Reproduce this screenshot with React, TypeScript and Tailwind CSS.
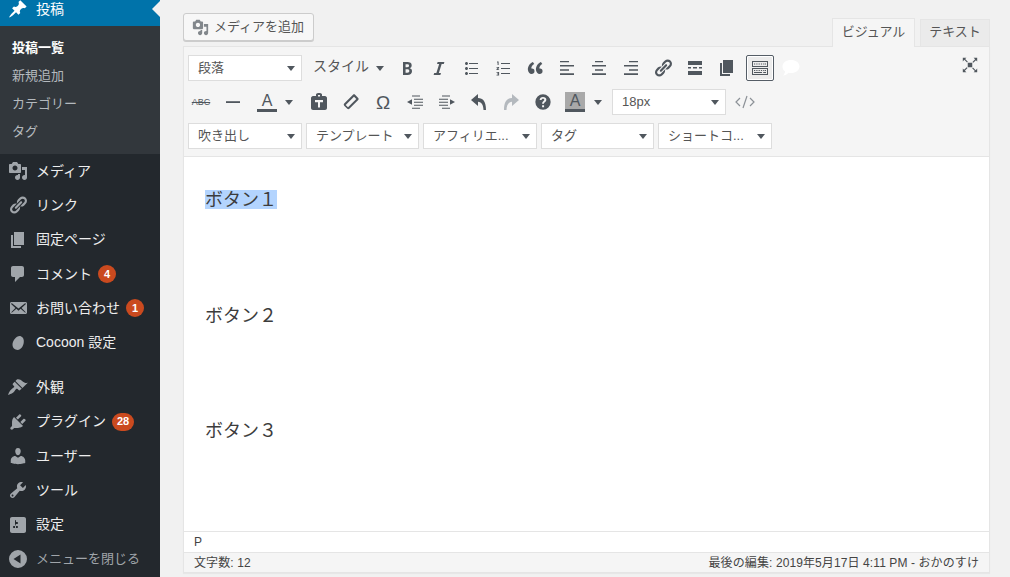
import React from "react";

const P: Record<string, string> = {
  post: "M10.44 3.02l1.82-1.82 6.36 6.35-1.83 1.82c-1.05-.68-2.48-.57-3.41.36l-.75.75c-.92.93-1.04 2.35-.35 3.41l-1.83 1.82-2.41-2.41-2.8 2.79c-.42.42-3.38 2.71-3.8 2.29s1.86-3.39 2.28-3.81l2.79-2.79L4.1 9.36l1.83-1.82c1.05.69 2.48.57 3.4-.36l.75-.75c.93-.92 1.05-2.35.36-3.41z",
  media: "M13 11V4c0-.55-.45-1-1-1h-1.67L9 1H5L3.67 3H2c-.55 0-1 .45-1 1v7c0 .55.45 1 1 1h10c.55 0 1-.45 1-1zM7 4.5c1.38 0 2.5 1.12 2.5 2.5S8.38 9.5 7 9.5 4.5 8.38 4.5 7 5.62 4.5 7 4.5zM14 6h5v10.5c0 1.38-1.12 2.5-2.5 2.5S14 17.88 14 16.5s1.12-2.5 2.5-2.5c.17 0 .34.02.5.05V9h-3V6zm-4 8.05V13h2v3.5c0 1.38-1.12 2.5-2.5 2.5S7 17.88 7 16.5 8.12 14 9.5 14c.17 0 .34.02.5.05z",
  link: "M17.74 2.76c1.68 1.69 1.68 4.41 0 6.1l-1.53 1.52c-1.12 1.12-2.7 1.47-4.14 1.09l2.62-2.61.76-.77.76-.76c.84-.84.84-2.2 0-3.04-.84-.85-2.2-.85-3.04 0l-.77.76-3.38 3.38c-.37-1.44-.02-3.02 1.1-4.14l1.52-1.53c1.69-1.68 4.42-1.68 6.1 0zM8.59 13.43l5.34-5.34c.42-.42.42-1.1 0-1.52-.44-.43-1.13-.39-1.53 0l-5.33 5.34c-.42.42-.42 1.1 0 1.52.44.43 1.13.39 1.52 0zm-.76 2.29l4.14-4.15c.38 1.44.03 3.02-1.09 4.14l-1.52 1.53c-1.69 1.68-4.41 1.68-6.1 0-1.68-1.68-1.68-4.42 0-6.1l1.53-1.52c1.12-1.12 2.7-1.47 4.14-1.1l-4.14 4.15c-.85.84-.85 2.2 0 3.05.84.84 2.2.84 3.04 0z",
  page: "M6 15V2h10v13H6zm-1 1h8v2H3V5h2v11z",
  comment: "M5 2h9c1.1 0 2 .9 2 2v7c0 1.1-.9 2-2 2h-2l-5 5v-5H5c-1.1 0-2-.9-2-2V4c0-1.1.9-2 2-2z",
  mail: "M19 14.5v-9c0-.83-.67-1.5-1.5-1.5H3.49c-.83 0-1.5.67-1.5 1.5v9c0 .83.67 1.5 1.5 1.5H17.5c.83 0 1.5-.67 1.5-1.5zm-1.31-9.11c.33.33.15.67-.03.84L13.6 9.95l3.9 4.06c.12.14.2.36.06.51-.13.16-.43.15-.56.05l-4.37-3.73-2.14 1.95-2.13-1.95-4.37 3.73c-.13.1-.43.11-.56-.05-.14-.15-.06-.37.06-.51l3.9-4.06-4.06-3.72c-.18-.17-.36-.51-.03-.84s.67-.17.95.07l6.24 5.04 6.25-5.04c.28-.24.62-.4.95-.07z",
  brush: "M14.48 11.06L7.41 3.99l1.5-1.5c.5-.56 2.3-.47 3.51.32 1.21.8 1.43 1.28 2.91 2.1 1.18.64 2.45 1.26 4.45.85zm-.71.71L6.7 4.7 4.93 6.47c-.39.39-.39 1.02 0 1.41l1.06 1.06c.39.39.39 1.03 0 1.42-.6.6-1.43 1.11-2.21 1.69-.35.26-.7.53-1.01.84C1.43 13.71 0 18 0 18s4.29-1.43 5.59-2.72c.31-.31.58-.66.84-1.01.58-.78 1.09-1.61 1.69-2.21.39-.39 1.03-.39 1.42 0l1.06 1.06c.39.39 1.02.39 1.41 0z",
  plugin: "M13.11 4.36L9.87 7.6 8 5.73l3.24-3.24c.35-.34 1.05-.2 1.56.32.52.51.66 1.21.31 1.55zm-8 1.77l.91-1.12 9.01 9.01-1.19.84c-.71.71-2.63 1.16-3.82 1.16H6.14L4.9 17.26c-.59.59-1.54.59-2.12 0-.59-.58-.59-1.53 0-2.12l1.24-1.24v-3.88c0-1.13.4-3.19 1.09-3.89zm7.26 3.97l3.24-3.24c.34-.35 1.04-.21 1.55.31.52.51.66 1.21.31 1.55l-3.24 3.25z",
  user: "M10 9.25c-2.27 0-2.73-3.44-2.73-3.44C7 4.02 7.82 2 9.97 2c2.16 0 2.98 2.02 2.71 3.81 0 0-.41 3.44-2.68 3.44zm0 2.57L12.72 10c2.39 0 4.52 2.33 4.52 4.53v2.49s-3.65 1.13-7.24 1.13c-3.65 0-7.24-1.13-7.24-1.13v-2.49c0-2.25 1.94-4.48 4.47-4.48z",
  tool: "M16.68 9.77c-1.34 1.34-3.3 1.67-4.95.99l-5.41 6.52c-.99.99-2.59.99-3.58 0s-.99-2.59 0-3.57l6.52-5.42c-.68-1.65-.35-3.61.99-4.95 1.28-1.28 3.12-1.62 4.72-1.06l-2.89 2.89 2.82 2.82 2.86-2.87c.53 1.58.18 3.39-1.08 4.65zM3.81 16.21c.4.39 1.04.39 1.43 0 .4-.4.4-1.04 0-1.43-.39-.4-1.03-.4-1.43 0-.39.39-.39 1.03 0 1.43z",
  settings: "M18 16V4c0-1.1-.9-2-2-2H4c-1.1 0-2 .9-2 2v12c0 1.1.9 2 2 2h12c1.1 0 2-.9 2-2zM8 11h1c.55 0 1 .45 1 1s-.45 1-1 1H8v1.5c0 .28-.22.5-.5.5s-.5-.22-.5-.5V13H6c-.55 0-1-.45-1-1s.45-1 1-1h1V5.5c0-.28.22-.5.5-.5s.5.22.5.5V7h1c.55 0 1 .45 1 1s-.45 1-1 1h-1v5.5c0 .28-.22.5-.5.5s-.5-.22-.5-.5V9z",
  cocoon: "M12.800 3.200C15.300 3.900 16.300 6.800 15.700 10c-.6 3.400-2.900 6.900-6 6.900-3 0-5.200-2.100-5.200-5.200C4.500 7.500 8.800 2.100 12.800 3.200z",
  collapse: "M10 1a9 9 0 1 0 0 18 9 9 0 0 0 0-18zm2.5 4.5v9L5.5 10z",
  bold: "M6 4v13h4.54c1.37 0 2.46-.33 3.26-1 .8-.66 1.2-1.58 1.2-2.77 0-.84-.17-1.51-.51-2.01s-.9-.85-1.67-1.03v-.09c.57-.1 1.02-.4 1.36-.9s.51-1.13.51-1.91c0-1.14-.39-1.98-1.17-2.5C12.75 4.26 11.5 4 9.78 4H6zm2.57 5.15V6.26h1.36c.73 0 1.27.11 1.61.32.34.22.51.58.51 1.07 0 .54-.16.92-.47 1.15s-.82.35-1.51.35h-1.5zm0 2.19h1.6c1.44 0 2.16.53 2.16 1.61 0 .6-.17 1.05-.51 1.34s-.86.44-1.57.44H8.57v-3.39z",
  italic: "M14.78 6h-2.13l-2.8 9h2.12l-.62 2H4.6l.62-2h2.14l2.8-9H8.03l.62-2h6.75z",
  ul: "M5.5 7C4.67 7 4 6.33 4 5.5 4 4.68 4.67 4 5.5 4 6.32 4 7 4.68 7 5.5 7 6.33 6.32 7 5.5 7zM8 5h9v1H8V5zm-2.5 7c-.83 0-1.5-.67-1.5-1.5C4 9.68 4.67 9 5.5 9c.82 0 1.5.68 1.5 1.5 0 .83-.68 1.5-1.5 1.5zM8 10h9v1H8v-1zm-2.5 7c-.83 0-1.5-.67-1.5-1.5 0-.82.67-1.5 1.5-1.5.82 0 1.5.68 1.5 1.5 0 .83-.68 1.5-1.5 1.5zM8 15h9v1H8v-1z",
  ol: "M8 5h9v1H8zM8 10h9v1H8zM8 15h9v1H8zM4 3.5h1.6V7H4.6V4.5H4zM3.5 9h2.6v1l-1.3 1.2h1.3v.8H3.5v-.9l1.5-1.3H3.5zM3.5 14h2.6v3.6H3.5v-.8h1.6v-.6H4v-.7h1.1v-.7H3.5z",
  quote: "M9.49 13.22c0-.74-.2-1.38-.61-1.9-.62-.78-1.83-.88-2.53-.72-.29-1.65 1.11-3.75 2.92-4.65L7.88 4c-2.73 1.3-5.42 4.28-4.96 8.05C3.21 14.43 4.59 16 6.54 16c.85 0 1.56-.25 2.12-.75s.83-1.18.83-2.03zm8.05 0c0-.74-.2-1.38-.61-1.9-.63-.78-1.83-.88-2.53-.72-.29-1.65 1.11-3.75 2.92-4.65L15.93 4c-2.73 1.3-5.41 4.28-4.95 8.05.29 2.38 1.66 3.95 3.61 3.95.85 0 1.56-.25 2.12-.75s.83-1.18.83-2.03z",
  left: "M3 3h9v1.200H3zM3 7h14v1.500H3zM3 11.200h9v1.500H3zM3 15.200h14v1.800H3z",
  center: "M6 3h8v1.200H6zM3 7h14v1.500H3zM6 11.200h8v1.500H6zM3 15.200h14v1.800H3z",
  right: "M8 3h9v1.200H8zM3 7h14v1.500H3zM8 11.200h9v1.500H8zM3 15.200h14v1.800H3z",
  more: "M3 3h14v4H3zM3 9h3v1.500H3zM8 9h4v1.500H8zM14 9h3v1.500h-3zM3 13h14v4H3z",
  kb: "M2 3h16v6H2zM3 4v4h14V4zM4 5.500h1.200v1H4zM6.300 5.500h1.200v1H6.300zM8.600 5.500h1.200v1H8.600zM10.900 5.500h1.200v1h-1.200zM13.200 5.500h1.200v1h-1.200zM15 5.500h1v1h-1zM2 10h16v7H2zM3 11v5h14v-5zM4 12h1.200v1H4zM6.300 12h1.200v1H6.300zM8.600 12h1.200v1H8.600zM10.900 12h1.200v1h-1.200zM13.200 12h1.200v1h-1.200zM15 12h1v1h-1zM4 14h8v1H4zM13.200 14h2.800v1h-2.800z",
  bubble: "M10 2c4.7 0 8.5 2.7 8.5 6.5S14.7 15 10 15c-.8 0-1.600-.1-2.300-.2C6.300 16.200 4 17.500 2 17.500c1-.9 1.900-2.200 2.100-3.900C2.500 12.400 1.500 10.600 1.500 8.500 1.500 4.700 5.300 2 10 2z",
  expand: "M2 2h4l-1.400 1.400 3 3-.9.9-3-3L2 6zM18 2v4l-1.400-1.400-3 3-.9-.9 3-3L14 2zM2 18v-4l1.400 1.400 3-3 .9.9-3 3L6 18zM18 18h-4l1.400-1.400-3-3 .9-.9 3 3L18 14zM7.500 7.500h5v5h-5z",
  hr: "M3 9.200h14v1.800H3z",
  paste: "M7 2.500C7 1.500 8.500 1 10 1s3 .5 3 1.500V4h3c1 0 2 1 2 2v10c0 1-1 2-2 2H4c-1 0-2-1-2-2V6c0-1 1-2 2-2h3zM9 3v1.500h2V3zM6 8v2.200h3v5.300h2v-5.300h3V8z",
  erase: "M12 2.800c.6-.6 1.500-.6 2.100 0l3.100 3.100c.6.6.6 1.500 0 2.100l-8.800 8.800c-.6.6-1.500.6-2.100 0l-3.100-3.100c-.6-.6-.6-1.500 0-2.100zM13 4.700L4.700 13l2.300 2.300L15.300 7z",
  outdent: "M7 3.500h8v1H7zM9 6.700h9v1H9zM9 9.700h9v1H9zM9 12.700h9v1H9zM7 15.700h8v1H7zM7 7.300v5.400L2 10z",
  indent: "M5 3.500h8v1H5zM2 6.700h9v1H2zM2 9.700h9v1H2zM2 12.700h9v1H2zM5 15.700h8v1H5zM13 7.300v5.400l5-2.700z",
  undo: "M9 2v4c5 0 8 3.500 8 12h-2.500c0-4.500-1.700-8-5.500-8.300V14L2 8z",
  redo: "M11 2v4C6 6 3 9.500 3 18h2.500c0-4.500 1.700-8 5.500-8.300V14l7-6z",
  help: "M10 1.500a8.500 8.500 0 1 0 0 17 8.500 8.500 0 0 0 0-17zM9 13.500h2.200v2.200H9zM10 4.500c2.200 0 3.700 1.100 3.700 3 0 1.400-.8 2.100-1.600 2.700-.6.500-1 .8-1 1.800H9c0-1.600.6-2.300 1.300-2.900.6-.5 1.100-.8 1.100-1.500 0-.7-.6-1.100-1.400-1.100-.9 0-1.500.5-1.600 1.400H6.300C6.400 5.800 7.800 4.500 10 4.500z",
};

function Ic({ n, s = 20, className = "" }: { n: string; s?: number; className?: string }) {
  return (
    <svg viewBox="0 0 20 20" width={s} height={s} className={className} fill="currentColor" fillRule="evenodd">
      <path d={P[n]} />
    </svg>
  );
}

function Arrow() {
  return (
    <svg viewBox="0 0 8 5" width="8" height="5" className="shrink-0 text-[#50575e]" fill="currentColor">
      <path d="M0 0h8L4 5z" />
    </svg>
  );
}

function Badge({ v }: { v: string }) {
  return (
    <span className="ml-[6px] flex h-[18px] min-w-[18px] items-center justify-center rounded-full bg-[#ca4a1f] px-[5px] text-[11px] font-bold leading-none text-white">
      {v}
    </span>
  );
}

function Item({ icon, label, badge }: { icon: string; label: string; badge?: string }) {
  return (
    <div className="flex h-[34.3px] items-center text-[14px] text-[#eeeeee]">
      <div className="flex w-[36px] justify-center text-[#a0a5aa]">
        <Ic n={icon} />
      </div>
      <span>{label}</span>
      {badge && <Badge v={badge} />}
    </div>
  );
}

function Sidebar() {
  return (
    <aside className="h-[577px] w-[160px] shrink-0 overflow-hidden bg-[#23282d]">
      <div className="relative flex h-[26px] items-center bg-[#0073aa] pb-[8px] text-[14px] text-white">
        <div className="flex w-[36px] justify-center">
          <Ic n="post" />
        </div>
        <span>投稿</span>
        <div className="absolute right-0 top-[1px] h-0 w-0 border-y-[8px] border-r-[8px] border-y-transparent border-r-[#f1f1f1]" />
      </div>
      <div className="bg-[#32373c] py-[8px] pl-[12px] text-[13px] text-[#b4b9be]">
        <div className="flex h-[28px] items-center font-bold text-white">投稿一覧</div>
        <div className="flex h-[28px] items-center">新規追加</div>
        <div className="flex h-[28px] items-center">カテゴリー</div>
        <div className="flex h-[28px] items-center">タグ</div>
      </div>
      <Item icon="media" label="メディア" />
      <Item icon="link" label="リンク" />
      <Item icon="page" label="固定ページ" />
      <Item icon="comment" label="コメント" badge="4" />
      <Item icon="mail" label="お問い合わせ" badge="1" />
      <Item icon="cocoon" label="Cocoon 設定" />
      <div className="h-[10.5px]" />
      <Item icon="brush" label="外観" />
      <Item icon="plugin" label="プラグイン" badge="28" />
      <Item icon="user" label="ユーザー" />
      <Item icon="tool" label="ツール" />
      <Item icon="settings" label="設定" />
      <div className="flex h-[34.3px] items-center text-[13px] text-[#a0a5aa]">
        <div className="flex w-[36px] justify-center">
          <Ic n="collapse" />
        </div>
        <span>メニューを閉じる</span>
      </div>
    </aside>
  );
}

function Btn({ n, muted, s = 20 }: { n: string; muted?: boolean; s?: number }) {
  return (
    <div className={`flex h-[26px] w-[32px] shrink-0 items-center justify-center ${muted ? "text-[#b4b9be]" : "text-[#50575e]"}`}>
      <Ic n={n} s={s} />
    </div>
  );
}

function Select({ label, w = "w-[114px]" }: { label: string; w?: string }) {
  return (
    <div className={`flex h-[26px] shrink-0 items-center justify-between border border-[#dddddd] bg-white pl-[9px] pr-[6px] text-[13px] text-[#555555] ${w}`}>
      <span className="whitespace-nowrap">{label}</span>
      <Arrow />
    </div>
  );
}

function Toolbar() {
  return (
    <div className="flex flex-col gap-[8px] border-b border-[#e5e5e5] bg-[#f5f5f5] pb-[7px] pl-[4px] pt-[8px]">
      <div className="flex h-[26px] items-center">
        <Select label="段落" />
        <div className="flex h-[26px] w-[89px] shrink-0 items-center pl-[11px] text-[14px] text-[#555555]">
          <span className="mb-[3px]">スタイル</span>
          <span className="ml-[7px]"><Arrow /></span>
        </div>
        <Btn n="bold" />
        <Btn n="italic" />
        <Btn n="ul" />
        <Btn n="ol" />
        <Btn n="quote" />
        <Btn n="left" />
        <Btn n="center" />
        <Btn n="right" />
        <Btn n="link" />
        <Btn n="more" />
        <Btn n="page" />
        <div className="ml-[3px] flex h-[26px] w-[28px] shrink-0 items-center justify-center rounded-[2px] border border-[#555d66] bg-[#ececec] text-[#50575e] shadow-[inset_0_0_0_1px_#ffffff]">
          <Ic n="kb" />
        </div>
        <div className="ml-[1px] flex h-[26px] w-[32px] shrink-0 items-center justify-center text-white">
          <Ic n="bubble" />
        </div>
        <div className="mb-[6px] ml-auto mr-[3px] flex h-[26px] w-[32px] items-center justify-center text-[#50575e]">
          <Ic n="expand" s={18} />
        </div>
      </div>
      <div className="-ml-[3px] flex h-[26px] items-center">
        <div className="flex h-[26px] w-[32px] shrink-0 items-center justify-center">
          <span className="text-[9px] leading-none text-[#50575e] line-through">ABC</span>
        </div>
        <Btn n="hr" />
        <div className="flex h-[26px] w-[54px] shrink-0 items-center pl-[8px]">
          <span className="flex h-[20px] w-[20px] items-center justify-center border-b-[3px] border-[#50575e] text-[16px] leading-none text-[#50575e]">A</span>
          <span className="ml-[8px]"><Arrow /></span>
        </div>
        <Btn n="paste" />
        <Btn n="erase" />
        <div className="flex h-[26px] w-[32px] shrink-0 items-center justify-center text-[19px] leading-none text-[#50575e]">Ω</div>
        <Btn n="outdent" />
        <Btn n="indent" />
        <Btn n="undo" />
        <Btn n="redo" muted />
        <Btn n="help" s={18} />
        <div className="flex h-[26px] w-[53px] shrink-0 items-center pl-[6px]">
          <span className="flex h-[20px] w-[20px] items-center justify-center border-b-[3px] border-[#50575e] bg-[#a9a9a9] text-[16px] leading-none text-[#50575e]">A</span>
          <span className="ml-[9px]"><Arrow /></span>
        </div>
        <Select label="18px" w="w-[114px]" />
        <div className="flex h-[26px] w-[38px] shrink-0 items-center justify-center text-[#8c9197]">
          <svg viewBox="0 0 20 14" width="20" height="14" fill="none" stroke="currentColor" strokeWidth="1.2">
            <path d="M5 3L1 7l4 4M15 3l4 4-4 4M12 1L8 13" />
          </svg>
        </div>
      </div>
      <div className="flex h-[26px] items-center gap-[4px]">
        <Select label="吹き出し" />
        <Select label="テンプレート" w="w-[113px]" />
        <Select label="アフィリエ..." />
        <Select label="タグ" w="w-[113px]" />
        <Select label="ショートコ..." />
      </div>
    </div>
  );
}

function Body() {
  return (
    <div className="flex h-[374px] flex-col bg-white pl-[21px] pt-[33px] text-[18px] text-[#3c3c3c]">
      <div className="h-[19px] leading-[21px]">
        <span className="inline-block h-[19px] w-[72px] bg-[#b3d4fe] leading-[21px]">ボタン１</span>
      </div>
      <div className="mt-[97px] h-[19px] leading-[21px]">ボタン２</div>
      <div className="mt-[96px] h-[19px] leading-[21px]">ボタン３</div>
    </div>
  );
}

export default function App() {
  return (
    <div
      className="flex h-[577px] w-[1010px] overflow-hidden bg-[#f1f1f1]"
      style={{ fontFamily: '"Liberation Sans", "Noto Sans CJK JP", sans-serif' }}
    >
      <Sidebar />
      <main className="min-w-0 flex-1 pl-[23px] pr-[20px]">
        <div className="relative z-10 -mb-[1px] flex h-[47px] items-start justify-between">
          <div className="mt-[13px] flex h-[28px] w-[131px] items-center rounded-[3px] border border-[#cccccc] bg-[#f7f7f7] pl-[8px] text-[13px] text-[#555555] shadow-[0_1px_0_#cccccc]">
            <Ic n="media" s={17} className="text-[#82878c]" />
            <span className="ml-[5px]">メディアを追加</span>
          </div>
          <div className="mt-[18px] flex h-[29px] items-end">
            <div className="flex h-[29px] w-[83px] items-center justify-center border border-b-0 border-[#e5e5e5] bg-[#f5f5f5] pb-[2px] text-[13px] text-[#555555]">ビジュアル</div>
            <div className="ml-[5px] flex h-[28px] w-[70px] items-center justify-center border border-[#e5e5e5] bg-[#ebebeb] pb-[2px] text-[13px] text-[#555555]">テキスト</div>
          </div>
        </div>
        <div className="border border-[#e5e5e5] shadow-[0_1px_1px_rgba(0,0,0,0.04)]">
          <Toolbar />
          <Body />
          <div className="flex h-[21px] items-center border-t border-[#e5e5e5] bg-white pl-[10px] text-[12px] text-[#444444]">P</div>
          <div className="flex h-[20px] items-center justify-between border-t border-[#e5e5e5] bg-[#f5f5f5] pl-[10px] pr-[10px] text-[12px] tracking-[0.1px] text-[#444444]">
            <span>文字数: 12</span>
            <span>最後の編集: 2019年5月17日 4:11 PM - おかのすけ</span>
          </div>
        </div>
      </main>
    </div>
  );
}
